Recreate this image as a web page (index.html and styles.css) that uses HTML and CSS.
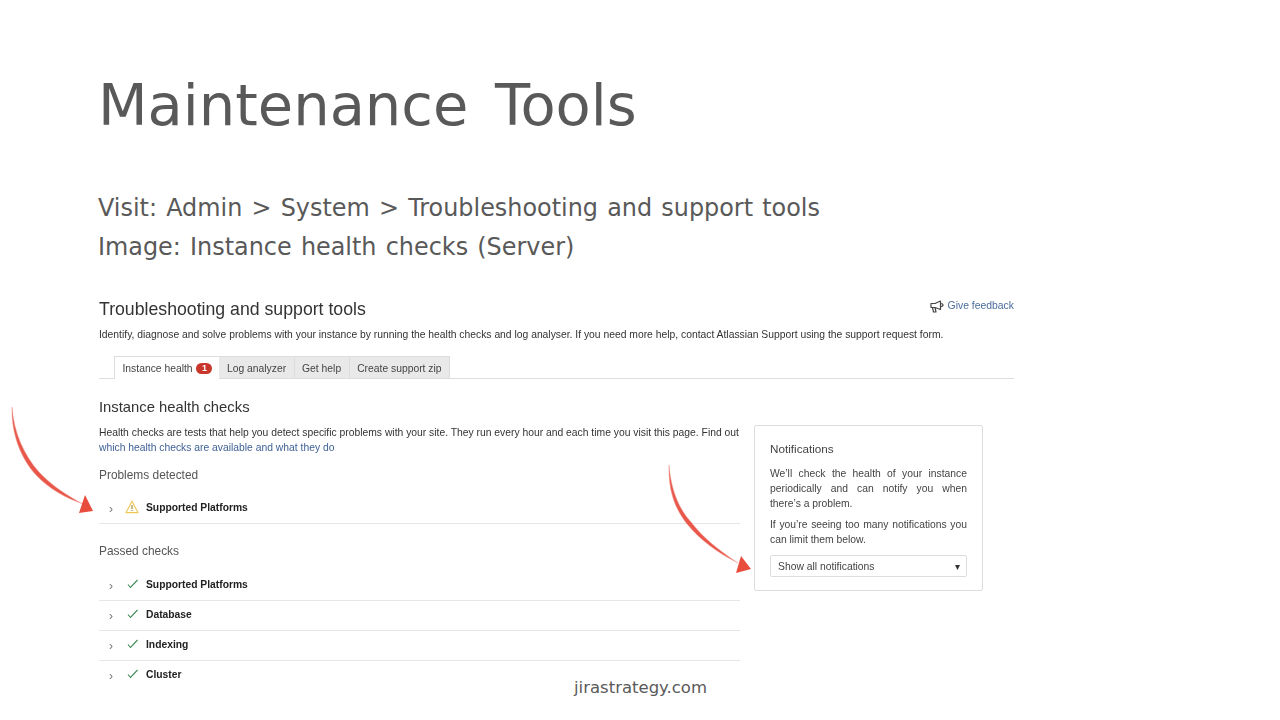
FILE: index.html
```html
<!DOCTYPE html>
<html lang="en">
<head>
<meta charset="utf-8">
<title>Maintenance Tools</title>
<link rel="stylesheet" href="styles.css">
</head>
<body>
<main class="slide">
  <h1 class="title">Maintenance Tools</h1>
  <div class="subtitle">
    <p>Visit: Admin &gt; System &gt; Troubleshooting and support tools</p>
    <p>Image: Instance health checks (Server)</p>
  </div>
  <section class="shot">
    <header class="shot-head">
      <h2>Troubleshooting and support tools</h2>
      <a class="feedback">
        <svg class="megaphone" width="14" height="13" viewBox="0 0 14 13"><path d="M1 3.5h4L10.5 1v8.5L5 7.5H1zM2.5 7.5l1 4.5h2.5l-1-4.5M10.5 3.5c1.5 0 2.5.5 2.5 1.5s-1 1.5-2.5 1.5" fill="none" stroke="#444" stroke-width="1.2" stroke-linejoin="round"/></svg>
        Give feedback
      </a>
    </header>
    <p class="intro">Identify, diagnose and solve problems with your instance by running the health checks and log analyser. If you need more help, contact Atlassian Support using the support request form.</p>
    <nav class="tabs">
      <span class="tab active">Instance health <b class="badge">1</b></span>
      <span class="tab">Log analyzer</span>
      <span class="tab">Get help</span>
      <span class="tab">Create support zip</span>
    </nav>
    <h3 class="section-title">Instance health checks</h3>
    <div class="columns">
      <div class="checks">
        <p class="desc">Health checks are tests that help you detect specific problems with your site. They run every hour and each time you visit this page. Find out <a>which health checks are available and what they do</a></p>
        <h4 class="group">Problems detected</h4>
        <div class="row lead alert">
          <span class="chev">›</span>
          <svg class="icon" width="14" height="14" viewBox="0 0 14 14"><path d="M7 1.2 13 12.6H1z" fill="#fffdf0" stroke="#eec65a" stroke-width="1.1" stroke-linejoin="round"/><path d="M7 5v4M7 10v1" stroke="#8a7a3a" stroke-width="1"/></svg>
          <span class="name">Supported Platforms</span>
        </div>
        <h4 class="group passed">Passed checks</h4>
        <div class="row lead">
          <span class="chev">›</span>
          <svg class="icon" width="14" height="14" viewBox="0 0 14 14"><path d="M3 7.5 5.5 10.5 12.5 3" fill="none" stroke="#3f8a55" stroke-width="1.1"/></svg>
          <span class="name">Supported Platforms</span>
        </div>
        <div class="row">
          <span class="chev">›</span>
          <svg class="icon" width="14" height="14" viewBox="0 0 14 14"><path d="M3 7.5 5.5 10.5 12.5 3" fill="none" stroke="#3f8a55" stroke-width="1.1"/></svg>
          <span class="name">Database</span>
        </div>
        <div class="row">
          <span class="chev">›</span>
          <svg class="icon" width="14" height="14" viewBox="0 0 14 14"><path d="M3 7.5 5.5 10.5 12.5 3" fill="none" stroke="#3f8a55" stroke-width="1.1"/></svg>
          <span class="name">Indexing</span>
        </div>
        <div class="row">
          <span class="chev">›</span>
          <svg class="icon" width="14" height="14" viewBox="0 0 14 14"><path d="M3 7.5 5.5 10.5 12.5 3" fill="none" stroke="#3f8a55" stroke-width="1.1"/></svg>
          <span class="name">Cluster</span>
        </div>
      </div>
      <aside class="panel">
        <h4>Notifications</h4>
        <p>We’ll check the health of your instance periodically and can notify you when there’s a problem.</p>
        <p>If you’re seeing too many notifications you can limit them below.</p>
        <div class="select"><span>Show all notifications</span><span class="caret">▾</span></div>
      </aside>
    </div>
  </section>
  <svg class="arrow arrow-left" width="96" height="115" viewBox="0 0 96 115">
    <path d="M12 4C14 30 24 52 39 69C52 83 68 93 83 101C66 95 49 86 36 72C22 57 11 32 12 4Z" fill="#e8574a" stroke="#f2a49c" stroke-width=".5"/>
    <path d="M85 92 79 110 93 108Z" fill="#e84c3d"/>
  </svg>
  <svg class="arrow arrow-right" width="96" height="115" viewBox="0 0 96 115">
    <path d="M9 3C11 28 19 47 31 60C43 76 60 89 78 101C58 91 40 78 27 62C15 47 8 28 9 3Z" fill="#e8574a" stroke="#f2a49c" stroke-width=".5"/>
    <path d="M81 94 76 111 91 107Z" fill="#e84c3d"/>
  </svg>
  <div class="footer">jirastrategy.com</div>
</main>
</body>
</html>
```

FILE: styles.css
```css
* { box-sizing: border-box; }
html, body { margin: 0; padding: 0; background: #fff; }
.slide {
  position: relative;
  width: 1280px;
  height: 720px;
  overflow: hidden;
  padding: 68px 0 0 98px;
  font-family: "Liberation Sans", Arial, sans-serif;
  color: #333;
}
.title {
  margin: 0;
  font: 400 57.5px/76px "DejaVu Sans", sans-serif;
  word-spacing: 8.5px;
  color: #595959;
}
.subtitle { margin-top: 45px; font: 400 23.9px/39px "DejaVu Sans", sans-serif; word-spacing: 1.6px; color: #595959; }
.subtitle p { margin: 0; }
.shot { width: 915px; margin: 30px 0 0 1px; filter: blur(0.3px); }
.shot-head { display: flex; justify-content: space-between; align-items: flex-start; }
.shot-head h2 { margin: 0; font-size: 17.7px; font-weight: 400; line-height: 24px; color: #333; }
.feedback { display: flex; align-items: center; gap: 4px; font-size: 10.4px; line-height: 14px; color: #4a6c9b; margin-top: 2px; }
.intro { margin: 7px 0 0; font-size: 10.34px; line-height: 14px; color: #333; }
.tabs { display: flex; margin-top: 14px; padding-left: 15px; border-bottom: 1px solid #ddd; height: 23px; }
.tab { height: 22px; padding: 0 7.5px; font-size: 10.34px; line-height: 23px; color: #444; background: #e9e9e9; border: 1px solid #ddd; border-left: 0; border-bottom: 0; }
.tab.active { background: #fff; height: 23px; border-left: 1px solid #ddd; border-right: 0; padding-right: 7px; }
.badge { display: inline-block; width: 16px; height: 11px; border-radius: 6px; margin-left: 1px; background: #c9372c; color: #fff; font-size: 9px; line-height: 11px; text-align: center; vertical-align: 1px; }
.section-title { margin: 19px 0 0; font-size: 14.8px; font-weight: 400; line-height: 18px; color: #333; }
.columns { display: flex; gap: 14px; align-items: flex-start; margin-top: 9px; }
.checks { width: 641px; flex: none; }
.desc { margin: 0; font-size: 10.34px; line-height: 15px; color: #333; }
.desc a { color: #3f6196; }
.group { margin: 12px 0 0; font-size: 11.9px; font-weight: 400; line-height: 16px; color: #555; }
.group.passed { margin-top: 19px; }
.row { display: flex; align-items: center; height: 30.2px; padding-bottom: 3px; border-top: 1px solid #e6e6e6; }
.row.lead { border-top: 0; height: 32px; margin-top: 9px; padding-bottom: 0; }
.row.alert { height: 33px; margin-top: 8px; border-bottom: 1px solid #e6e6e6; padding-bottom: 0; }
.chev { width: 26px; padding-left: 10px; font-size: 12px; color: #777; position: relative; top: 2px; flex: none; }
.icon { flex: none; margin-right: 7px; }
.name { font-size: 10.3px; font-weight: 700; color: #222; }
.panel { width: 229px; height: 166px; flex: none; padding: 15px 15px 0; border: 1px solid #ddd; border-radius: 2px; }
.panel h4 { margin: 0; font-size: 11.7px; font-weight: 400; line-height: 16px; color: #444; }
.panel p { margin: 9px 0 0; font-size: 10.34px; line-height: 15px; color: #444; text-align: justify; }
.panel p + p { margin-top: 6px; }
.select { display: flex; justify-content: space-between; align-items: center; height: 22px; margin-top: 8px; padding: 0 6px 0 7px; border: 1px solid #ddd; border-radius: 2px; font-size: 10.34px; color: #444; }
.caret { font-size: 10px; color: #333; }
.arrow { position: absolute; }
.arrow-left { left: 0; top: 403px; }
.arrow-right { left: 660px; top: 462px; }
.footer { position: absolute; left: 574px; top: 678px; font: 400 16.5px/20px "DejaVu Sans", sans-serif; color: #595959; }
```
